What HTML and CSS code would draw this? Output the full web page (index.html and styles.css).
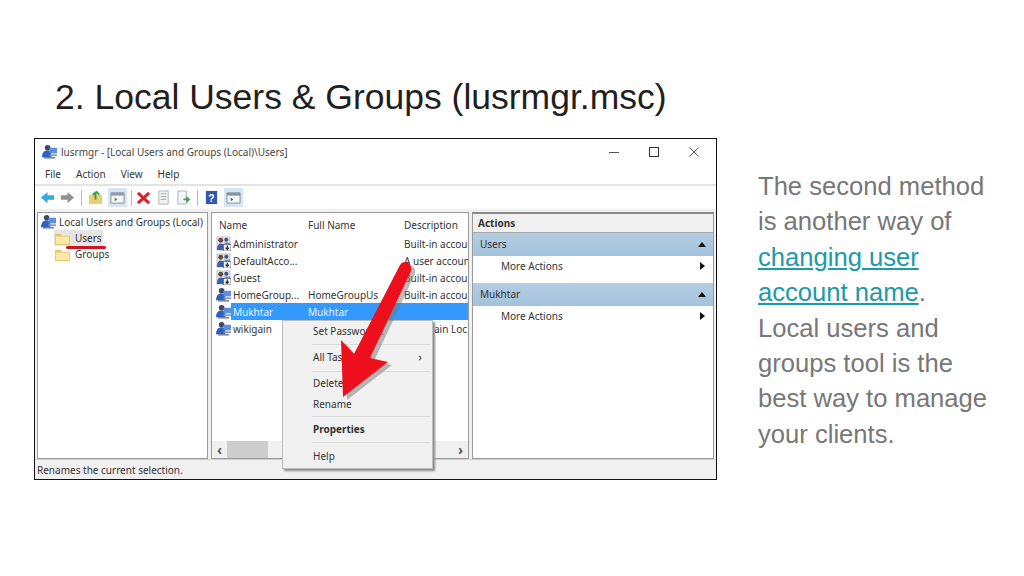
FILE: index.html
```html
<!DOCTYPE html>
<html lang="en">
<head>
<meta charset="utf-8">
<title>Local Users & Groups</title>
<link rel="stylesheet" href="styles.css">
</head>
<body>
<svg class="defs" width="0" height="0" aria-hidden="true">
  <defs>
    <symbol id="user" viewBox="0 0 16 16">
      <rect x="1" y="1" width="14" height="14" fill="#dfe6f0" stroke="#9aa3b0" stroke-width=".6"/>
      <circle cx="5" cy="4.500" r="2.600" fill="#6a4a3a"/>
      <path d="M1 14c0-4 2-6 4-6s3.500 1 4 3v4H1z" fill="#3f5fa8"/>
      <circle cx="11" cy="4" r="2.200" fill="#44546e"/>
      <path d="M9 7h6v3H9z" fill="#6f8fc8"/>
      <rect x="8" y="9" width="8" height="7" fill="#f4f4f4" stroke="#555" stroke-width=".7"/>
      <path d="M12 10v4M10.200 12.500l1.800 1.800 1.800-1.800" stroke="#222" stroke-width="1.200" fill="none"/>
    </symbol>
    <symbol id="group" viewBox="0 0 16 16">
      <circle cx="6" cy="4" r="3" fill="#3c4a63"/>
      <path d="M0 13c1-5 3-6 6-6s4 2 4 4v3H0z" fill="#2f5fc0"/>
      <path d="M8 4h8v6H8z" fill="#5d8fe0"/>
      <path d="M8 11h8v2H8z" fill="#8c99a8"/>
      <path d="M2 14h12v1.500H2z" fill="#6d7787"/>
    </symbol>
    <symbol id="folder" viewBox="0 0 16 14">
      <path d="M0 2h6l1.500 2H16v10H0z" fill="#e9c766"/>
      <path d="M1 5h14v8H1z" fill="#fbe9a9"/>
    </symbol>
  </defs>
</svg>
<main class="slide">
  <h1 class="title">2. Local Users &amp; Groups (lusrmgr.msc)</h1>
  <div class="content">
    <section class="window">
      <header class="titlebar">
        <svg class="app-icon" viewBox="0 0 16 16"><use href="#group"/></svg>
        <span class="window-title">lusrmgr - [Local Users and Groups (Local)\Users]</span>
        <div class="controls">
          <svg viewBox="0 0 12 12"><path d="M1 6.500h10" stroke="#555" fill="none"/></svg>
          <svg viewBox="0 0 12 12"><rect x="1.500" y="1.500" width="9" height="9" stroke="#333" fill="none"/></svg>
          <svg viewBox="0 0 12 12"><path d="M1.500 1.500l9 9M10.500 1.500l-9 9" stroke="#555" fill="none"/></svg>
        </div>
      </header>
      <nav class="menubar">
        <span>File</span><span>Action</span><span>View</span><span>Help</span>
      </nav>
      <div class="toolbar">
        <svg class="tool" viewBox="0 0 16 16"><path d="M1 8l7-6v3.500h7v5H8V14z" fill="#35a8dc"/></svg>
        <svg class="tool" viewBox="0 0 16 16"><path d="M15 8L8 2v3.500H1v5h7V14z" fill="#8d9296"/></svg>
        <i class="sep"></i>
        <svg class="tool" viewBox="0 0 16 16"><path d="M1 5h14v10H1z" fill="#e9cf78"/><path d="M8 10V3M5 5l4-3 3 3" stroke="#3a9a4a" stroke-width="2" fill="none"/></svg>
        <span class="tool-on"><svg class="tool" viewBox="0 0 16 16"><path d="M1 3h14v11H1z" fill="#f5f5f5" stroke="#8a8f96"/><path d="M1 3h14v3H1z" fill="#8a9fb5"/><path d="M5 8l3 2-3 2z" fill="#3a9a4a"/></svg></span>
        <i class="sep sep-tight"></i>
        <svg class="tool" viewBox="0 0 16 16"><path d="M2 3l12 11M14 3L2 14" stroke="#d8242a" stroke-width="3.200" fill="none"/></svg>
        <svg class="tool" viewBox="0 0 16 16"><path d="M3 1h10v14H3z" fill="#f2f2f2" stroke="#aeb4ba"/><path d="M5 4h6M5 7h6M5 10h6" stroke="#a0a6ac"/></svg>
        <svg class="tool" viewBox="0 0 16 16"><path d="M2 1h9v14H2z" fill="#f5f5f5" stroke="#aeb4ba"/><path d="M8 9h3V6l4 4-4 4v-3H8z" fill="#3fa34d"/></svg>
        <i class="sep"></i>
        <svg class="tool" viewBox="0 0 16 16"><rect x="2" y="1" width="12" height="14" fill="#3058b0"/><text x="8" y="12.500" class="help-q">?</text></svg>
        <span class="tool-on"><svg class="tool" viewBox="0 0 16 16"><path d="M1 3h14v11H1z" fill="#f5f5f5" stroke="#8a8f96"/><path d="M1 3h14v3H1z" fill="#7f97ad"/><path d="M5 8l3 2-3 2z" fill="#1a7fc0"/></svg></span>
      </div>
      <div class="panes">
        <aside class="tree">
          <div class="tree-row"><svg class="row-icon" viewBox="0 0 16 16"><use href="#group"/></svg>Local Users and Groups (Local)</div>
          <div class="tree-child selected"><svg class="folder" viewBox="0 0 16 14"><use href="#folder"/></svg>Users</div>
          <div class="tree-child"><svg class="folder" viewBox="0 0 16 14"><use href="#folder"/></svg>Groups</div>
          <i class="underline"></i>
        </aside>
        <div class="list">
          <div class="list-grid">
            <div class="list-row list-head"><span>Name</span><span>Full Name</span><span>Description</span></div>
            <div class="list-row"><span class="name"><svg class="row-icon" viewBox="0 0 16 16"><use href="#user"/></svg>Administrator</span><span></span><span>Built-in accou</span></div>
            <div class="list-row"><span class="name"><svg class="row-icon" viewBox="0 0 16 16"><use href="#user"/></svg>DefaultAcco...</span><span></span><span>A user accoun</span></div>
            <div class="list-row"><span class="name"><svg class="row-icon" viewBox="0 0 16 16"><use href="#user"/></svg>Guest</span><span></span><span>Built-in accou</span></div>
            <div class="list-row"><span class="name"><svg class="row-icon" viewBox="0 0 16 16"><use href="#group"/></svg>HomeGroup...</span><span>HomeGroupUs</span><span>Built-in accou</span></div>
            <div class="list-row active"><span class="name"><svg class="row-icon" viewBox="0 0 16 16"><use href="#group"/></svg>Mukhtar</span><span>Mukhtar</span><span></span></div>
            <div class="list-row"><span class="name"><svg class="row-icon" viewBox="0 0 16 16"><use href="#group"/></svg>wikigain</span><span></span><span class="end">ain Loc</span></div>
          </div>
          <div class="hscroll">
            <span class="chev">‹</span><i class="thumb"></i><span class="chev">›</span>
          </div>
        </div>
        <aside class="actions">
          <div class="actions-head">Actions</div>
          <div class="group-head"><span>Users</span><i class="up"></i></div>
          <div class="action"><span>More Actions</span><i class="right"></i></div>
          <div class="group-head"><span>Mukhtar</span><i class="up"></i></div>
          <div class="action"><span>More Actions</span><i class="right"></i></div>
        </aside>
      </div>
      <footer class="statusbar">Renames the current selection.</footer>
      <div class="context">
        <div class="ctx-item ctx-first">Set Password...</div>
        <hr>
        <div class="ctx-item ctx-sub"><span>All Tasks</span><span class="ctx-chev">›</span></div>
        <hr>
        <div class="ctx-item ctx-tight">Delete</div>
        <div class="ctx-item ctx-tight ctx-rename">Rename</div>
        <hr>
        <div class="ctx-item strong">Properties</div>
        <hr>
        <div class="ctx-item">Help</div>
      </div>
      <svg class="arrow" viewBox="335 255 85 147">
        <path d="M343 397L341 340 354 354 400 265C404 259 413 263 411 271L370 358 388 362z" fill="#777" opacity=".5" transform="translate(4 3)"/>
        <path d="M343 397L341 340 354 354 400 265C404 259 413 263 411 271L370 358 388 362z" fill="#ee0f1d"/>
      </svg>
    </section>
    <aside class="side">
      <p>The second method is another way of <a href="#">changing user account name</a>. Local users and groups tool is the best way to manage your clients.</p>
    </aside>
  </div>
</main>
</body>
</html>
```
FILE: styles.css
```css
* { box-sizing: border-box; }
html, body { margin: 0; padding: 0; }
body { width: 1024px; height: 576px; overflow: hidden; background: #fff; }
.defs { position: absolute; }
.slide { width: 1024px; height: 576px; padding: 76px 0 0 34px; font-family: "Liberation Sans", Arial, sans-serif; }
.title { margin: 0 0 20px 21px; font-size: 35.500px; line-height: 42px; font-weight: 400; color: #1f1f1f; white-space: nowrap; }
.content { display: flex; align-items: flex-start; }

.window { position: relative; flex: none; width: 683px; height: 342px; display: flex; flex-direction: column; background: #fff; border: 1px solid #111; font-family: "Noto Sans", sans-serif; font-size: 10px; color: #333; }
.titlebar { display: flex; align-items: center; height: 25px; padding-left: 7px; flex: none; }
.app-icon { width: 15px; height: 15px; margin-right: 4px; }
.window-title { flex: 1; color: #444; }
.controls { display: flex; gap: 28px; padding-right: 16px; }
.controls svg { width: 12px; height: 12px; display: block; }
.menubar { display: flex; gap: 15px; height: 22px; padding: 0 0 0 10px; align-items: center; border-bottom: 2px solid #e4e4e4; flex: none; }
.toolbar { display: flex; align-items: center; gap: 5px; height: 23px; padding-left: 5px; flex: none; background: #fff; }
.tool { width: 15px; height: 15px; display: block; flex: none; }
.tool-on { background: #d6e6f4; padding: 2px 2px; display: block; }
.sep { width: 1px; height: 16px; background: #b9b9b9; margin: 0 1px; }
.sep-tight { margin: 0 -1px; }
.help-q { font: 700 11px "Liberation Sans", sans-serif; fill: #fff; text-anchor: middle; }

.panes { flex: 1; display: flex; gap: 3px; padding: 3px 2px 0 2px; background: #f0f0f0; min-height: 0; }
.tree { position: relative; width: 171px; background: #fff; border: 1px solid #9a9a9a; padding: 0 0 0 3px; flex: none; }
.tree-row { display: flex; align-items: center; height: 17px; gap: 3px; white-space: nowrap; }
.row-icon { width: 15px; height: 15px; flex: none; }
.tree-child { display: flex; align-items: center; height: 16px; margin-left: 13px; gap: 5px; width: 49px; padding-left: 1px; }
.folder { width: 15px; height: 13px; flex: none; }
.selected { background: #e5e5e5; }
.underline { position: absolute; left: 28px; top: 33px; width: 40px; height: 3px; border-radius: 2px; background: #d3121f; }

.list { width: 258px; flex: none; background: #fff; border: 1px solid #9a9a9a; display: flex; flex-direction: column; overflow: hidden; }
.list-grid { flex: 1; padding-top: 1px; }
.list-row { display: grid; grid-template-columns: 92px 96px 1fr; height: 17px; align-items: center; white-space: nowrap; overflow: hidden; padding-left: 4px; }
.list-row > span { overflow: hidden; }
.list-head { height: 21px; padding-left: 7px; grid-template-columns: 89px 96px 1fr; }
.name { display: flex; align-items: center; gap: 2px; }
.active { background: #3399ff; color: #e6f2ff; margin-left: 19px; padding-left: 0; grid-template-columns: 77px 96px 1fr; }
.active .row-icon { margin-left: -15px; }
.active .name { overflow: visible; }
.list-row.active { overflow: visible; }
.end { padding-left: 30px; }
.hscroll { height: 17px; display: flex; align-items: center; background: #f0f0f0; flex: none; padding: 0 5px; font-size: 14px; font-weight: 700; }
.thumb { flex: 1; height: 17px; background: #cdcdcd; margin: 0 190px 0 5px; }
.chev { line-height: 14px; color: #555; }

.actions { flex: 1; background: #fff; border: 1px solid #9a9a9a; border-top: 2px solid #8a8a8a; }
.actions-head { height: 19px; padding-left: 5px; display: flex; align-items: center; background: #f0f0f0; font-weight: 700; border-bottom: 1px solid #a8a8a8; }
.group-head { display: flex; justify-content: space-between; align-items: center; height: 22.500px; padding: 0 7px; background: linear-gradient(#b3cde3, #a4c2dc); }
.action { display: flex; justify-content: space-between; align-items: center; height: 21px; margin-bottom: 6.500px; padding: 0 8px 0 28px; }
.up { width: 0; height: 0; border: 4px solid transparent; border-top: 0; border-bottom: 5px solid #111; }
.right { width: 0; height: 0; border: 4.500px solid transparent; border-right: 0; border-left: 5px solid #111; }

.statusbar { height: 20px; flex: none; display: flex; align-items: center; padding-left: 2px; background: #f0f0f0; color: #333; border-top: 1px solid #cfcfcf; }

.context { position: absolute; left: 247px; top: 181px; width: 151px; background: #f1f1f1; border: 1px solid #bdbdbd; box-shadow: 2px 2px 2px #8a8a8a; padding-left: 30px; }
.context hr { margin: 0 2px 0 -1px; border: 0; border-top: 1px solid #dcdcdc; }
.ctx-item { height: 25px; display: flex; align-items: center; }
.ctx-first { height: 20px; margin-bottom: 3px; }
.ctx-sub { height: 24px; margin-bottom: 2px; justify-content: space-between; padding-right: 10px; }
.ctx-tight { height: 22px; }
.ctx-rename { height: 20px; margin-bottom: 2px; }
.ctx-chev { font-weight: 700; color: #666; }
.strong { font-weight: 700; height: 24px; margin-bottom: 1px; }
.arrow { position: absolute; left: 300px; top: 116px; width: 85px; height: 147px; }

.side { width: 236px; margin: 31px 0 0 41px; flex: none; color: #777; font-size: 25.600px; line-height: 35.400px; }
.side p { margin: 0; }
.side a { color: #1a9aaa; text-decoration: underline; }
```
